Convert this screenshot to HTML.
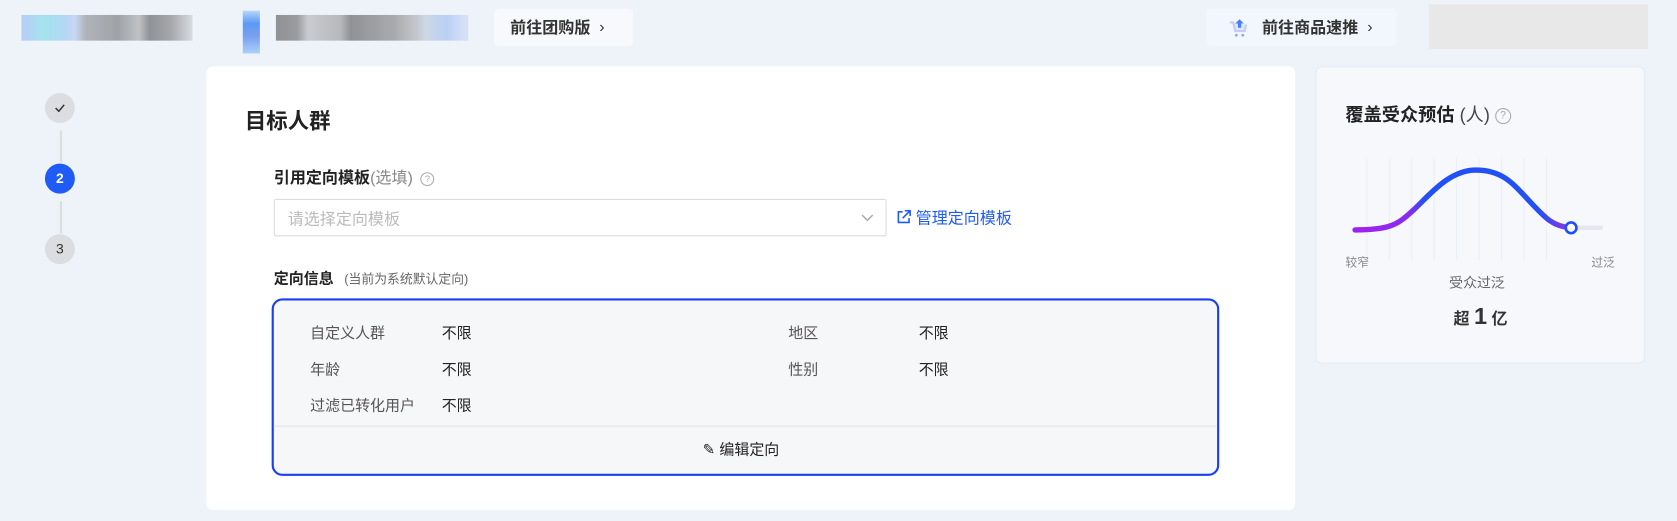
<!DOCTYPE html>
<html><head><meta charset="utf-8"><style>
*{margin:0;padding:0;box-sizing:border-box}
html,body{width:1677px;height:521px;overflow:hidden}
body{background:#eef2f9;font-family:"Liberation Sans","Noto Sans CJK SC",sans-serif;position:relative;color:#222}
#w{position:absolute;left:0;top:0;width:1568px;height:488px;transform:scale(1.0695);transform-origin:0 0}
.a{position:absolute}
.btn{position:absolute;background:#f7f9fc;border-radius:4px;font-size:15px;font-weight:bold;color:#333;display:flex;align-items:center}
.step{position:absolute;left:42px;width:28px;height:28px;border-radius:50%;background:#dcdde0;color:#333;font-size:13px;text-align:center;line-height:28px}
.vl{position:absolute;left:56px;width:2px;background:#dcdde0}
.card{position:absolute;background:#fff;border-radius:6px}
.lab{position:absolute;font-size:14px;color:#555}
.val{position:absolute;font-size:14px;color:#222}
</style></head><body><div id="w">
<div class="a" style="left:20px;top:14px;width:160px;height:24px;background:linear-gradient(90deg,#b9cdf7 0,#a3e3ee 20px,#b2d8f5 40px,#c8d6f5 50px,#b0b4ba 60px,#9fa3a8 90px,#bfc1c5 110px,#8f9296 120px,#a6a8ab 140px,#d8dbe1 160px)"></div>
<div class="a" style="left:227px;top:10px;width:16px;height:40px;background:linear-gradient(180deg,#b8d6fa,#5a9af5 30%,#7a9ff0 60%,#aad2fa)"></div>
<div class="a" style="left:258px;top:14px;width:180px;height:24px;background:linear-gradient(90deg,#8f9194 0,#9a9c9f 20px,#c9cbd0 30px,#b7b9bc 60px,#909295 70px,#a8aaad 110px,#c3c5ca 130px,#cdd7e4 140px,#bcd0f5 160px,#d9e3f7 180px)"></div>
<div class="btn" style="left:462px;top:8px;width:130px;height:35px;padding-left:15px">前往团购版&nbsp;&nbsp;<span style="font-weight:normal">›</span></div>
<div class="btn" style="left:1128px;top:8px;width:178px;height:35px;padding-left:20px;background:#f2f7fd">
<svg width="20" height="20" viewBox="0 0 20 20" style="margin-right:12px"><path d="M2 5h3l2 8h9l1-6" stroke="#c4cdf5" stroke-width="2" fill="#dfe5fb"/><path d="M11 2l4 4h-2.5v4h-3V6H7z" fill="#4a7cf7"/><circle cx="8" cy="17" r="1.3" fill="#8aa3f5"/><circle cx="14" cy="17" r="1.3" fill="#8aa3f5"/></svg>
前往商品速推&nbsp;&nbsp;<span style="font-weight:normal">›</span></div>
<div class="a" style="left:1336px;top:4px;width:205px;height:42px;background:#e8e8e8"></div>

<div class="step" style="top:87px"><svg width="10" height="8" viewBox="0 0 10 8" style="vertical-align:0"><path d="M1 4l3 3 5-6" stroke="#333" stroke-width="1.4" fill="none"/></svg></div>
<div class="vl" style="top:122px;height:30px"></div>
<div class="step" style="top:153px;background:#1f5cf5;color:#fff;font-weight:bold">2</div>
<div class="vl" style="top:188px;height:30px"></div>
<div class="step" style="top:219px">3</div>

<div class="card" style="left:193px;top:62px;width:1018px;height:415px"></div>
<div class="a" style="left:229px;top:97px;font-size:20px;font-weight:bold">目标人群</div>
<div class="a" style="left:256px;top:155px;font-size:15px;font-weight:bold;color:#222">引用定向模板<span style="font-weight:normal;color:#888">(选填)</span> <span style="display:inline-block;width:13px;height:13px;border:1px solid #aaa;border-radius:50%;font-size:9px;text-align:center;line-height:11px;color:#aaa;font-weight:normal;vertical-align:1px;margin-left:3px">?</span></div>
<div class="a" style="left:256px;top:186px;width:573px;height:35px;border:1px solid #dcdcdc;border-radius:2px;background:#fff;font-size:15px;color:#bbb;padding:7px 12px">请选择定向模板
<svg class="a" style="right:10px;top:11px" width="14" height="10" viewBox="0 0 14 10"><path d="M2 3l5 5 5-5" stroke="#aaa" stroke-width="1.4" fill="none"/></svg></div>
<div class="a" style="left:838px;top:193px;font-size:15px;color:#1f5cf5">
<svg width="14" height="14" viewBox="0 0 14 14" style="vertical-align:-1px"><path d="M6 2H2v10h10V8M8 1h5v5M13 1L6 8" stroke="#1f5cf5" stroke-width="1.5" fill="none"/></svg> 管理定向模板</div>
<div class="a" style="left:256px;top:250px;font-size:14px;font-weight:bold">定向信息 <span style="font-weight:normal;font-size:12px;color:#666;margin-left:6px">(当前为系统默认定向)</span></div>
<div class="a" style="left:254px;top:279px;width:886px;height:166px;border:2px solid #1a3ff0;border-radius:10px;background:#f6f7f9"></div>
<div class="lab" style="left:290px;top:301px">自定义人群</div><div class="val" style="left:413px;top:301px">不限</div>
<div class="lab" style="left:290px;top:335px">年龄</div><div class="val" style="left:413px;top:335px">不限</div>
<div class="lab" style="left:290px;top:369px">过滤已转化用户</div><div class="val" style="left:413px;top:369px">不限</div>
<div class="lab" style="left:737px;top:301px">地区</div><div class="val" style="left:859px;top:301px">不限</div>
<div class="lab" style="left:737px;top:335px">性别</div><div class="val" style="left:859px;top:335px">不限</div>
<div class="a" style="left:256px;top:398px;width:882px;height:1px;background:#e3e4e6"></div>
<div class="a" style="left:657px;top:410px;font-size:14px;color:#222">✎ 编辑定向</div>

<div class="card" style="left:1230px;top:62px;width:308px;height:278px;background:#f6f8fc;border:1px solid #e6eaf2"></div>
<div class="a" style="left:1258px;top:93px;font-size:17px;font-weight:bold;color:#222">覆盖受众预估 <span style="font-weight:normal;color:#444">(人)</span> <span style="display:inline-block;width:15px;height:15px;border:1px solid #aaa;border-radius:50%;font-size:10px;text-align:center;line-height:13px;color:#aaa;font-weight:normal;vertical-align:2px">?</span></div>
<svg class="a" style="left:1230px;top:130px" width="308" height="130" viewBox="1230 130 308 130">
<defs><linearGradient id="g" x1="1267" x2="1469" gradientUnits="userSpaceOnUse"><stop offset="0" stop-color="#a020f0"/><stop offset=".25" stop-color="#8a2cf0"/><stop offset=".32" stop-color="#2350f5"/><stop offset=".85" stop-color="#2350f5"/><stop offset="1" stop-color="#9b30e0"/></linearGradient></defs>
<g stroke="#eceef3" stroke-width="1"><path d="M1362 148v95M1383 148v95M1404 148v95M1425 148v95M1446 148v95M1341 148v95M1320 148v95M1299 148v95M1278 148v95"/></g>
<path d="M1469 213H1497" stroke="#e4e7ee" stroke-width="4" stroke-linecap="round"/>
<path d="M1267 215C1300 215 1307 210 1322 196S1355 159 1380 159S1415 172 1430 188S1452 212 1469 213" stroke="url(#g)" stroke-width="5" fill="none" stroke-linecap="round"/>
<circle cx="1469" cy="213" r="5" fill="#fff" stroke="#2350f5" stroke-width="2.5"/>
</svg>
<div class="a" style="left:1258px;top:237px;font-size:11px;color:#888">较窄</div>
<div class="a" style="left:1488px;top:237px;font-size:11px;color:#888">过泛</div>
<div class="a" style="left:1355px;top:254px;font-size:13px;color:#666">受众过泛</div>
<div class="a" style="left:1359px;top:283px;font-size:15px;font-weight:bold;color:#333">超 <span style="font-size:22px">1</span> 亿</div>
</div></body></html>
